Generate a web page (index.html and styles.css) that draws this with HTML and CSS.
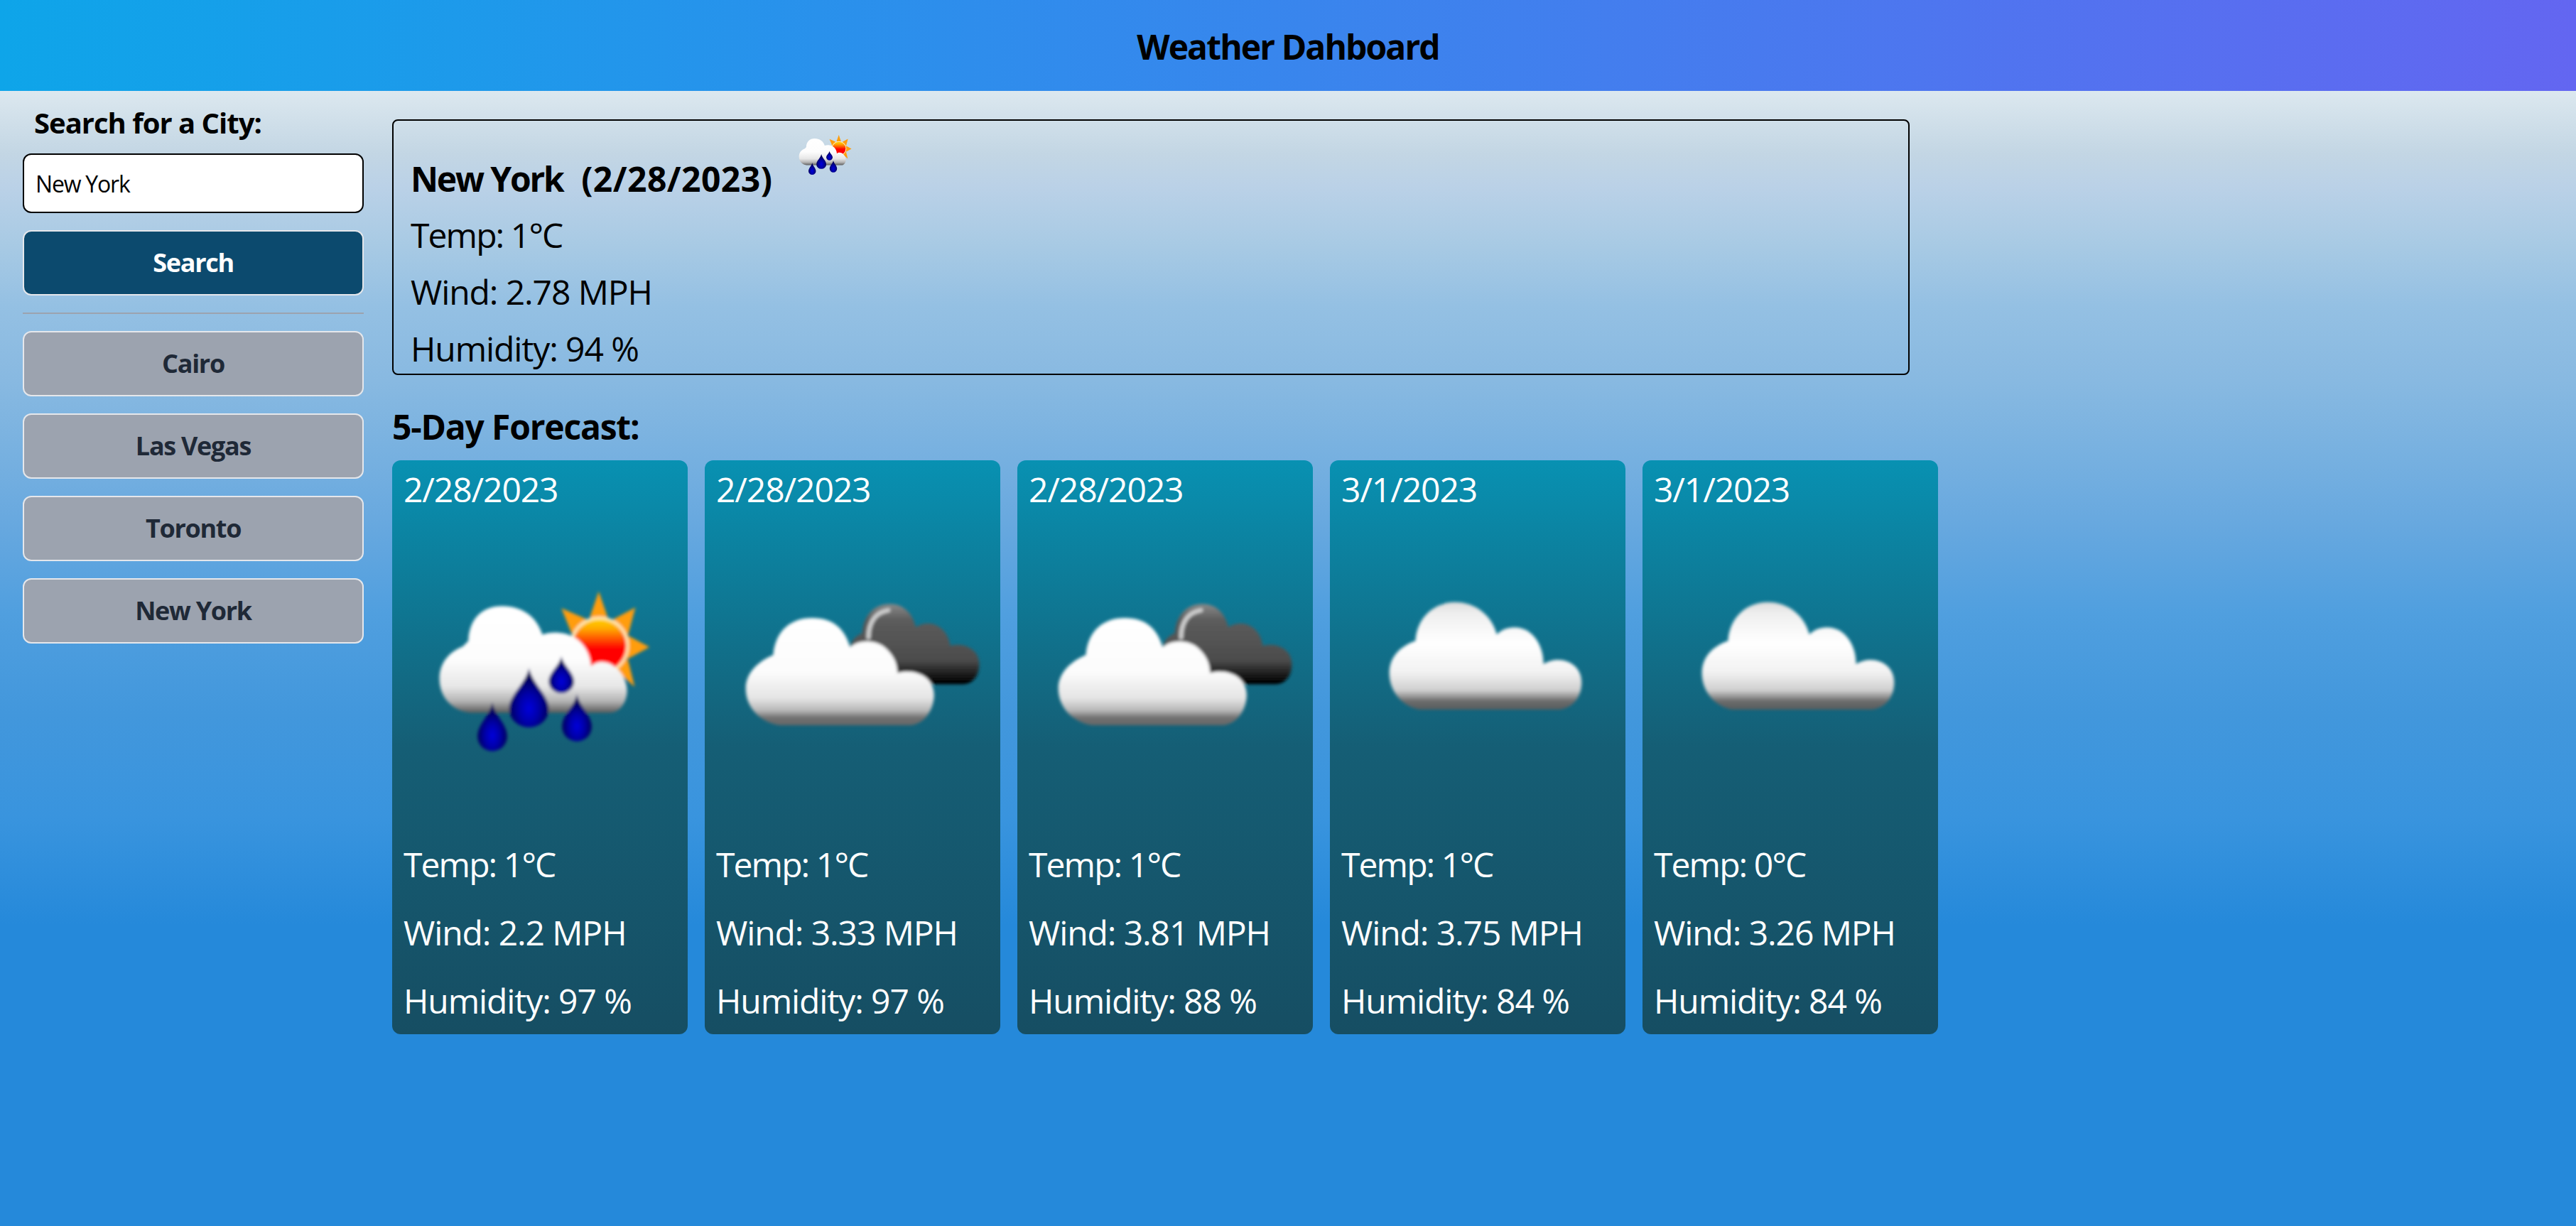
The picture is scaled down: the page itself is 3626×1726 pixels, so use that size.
FILE: index.html
```html
<!DOCTYPE html>
<html lang="en">
<head>
<meta charset="utf-8">
<title>Weather Dashboard</title>
<link rel="stylesheet" href="styles.css">
</head>
<body>
<svg class="sprite" aria-hidden="true">
  <defs>
    <filter id="soft" x="-10%" y="-10%" width="120%" height="120%"><feGaussianBlur stdDeviation="2.4"/></filter>
    <linearGradient id="rainCloud" gradientUnits="userSpaceOnUse" x1="0" y1="100" x2="0" y2="256">
      <stop offset="0" stop-color="#fff"/><stop offset=".5" stop-color="#fdfdfd"/><stop offset=".75" stop-color="#e6e6e6"/><stop offset=".88" stop-color="#b4b4b4"/><stop offset="1" stop-color="#505050"/>
    </linearGradient>
    <linearGradient id="frontCloud" gradientUnits="userSpaceOnUse" x1="0" y1="118" x2="0" y2="272">
      <stop offset="0" stop-color="#fff"/><stop offset=".5" stop-color="#fcfcfc"/><stop offset=".75" stop-color="#e4e4e4"/><stop offset=".86" stop-color="#b8b8b8"/><stop offset=".93" stop-color="#707070"/><stop offset="1" stop-color="#686868"/>
    </linearGradient>
    <linearGradient id="loneCloud" gradientUnits="userSpaceOnUse" x1="0" y1="95" x2="0" y2="248">
      <stop offset="0" stop-color="#dedede"/><stop offset=".12" stop-color="#f0f0f0"/><stop offset=".38" stop-color="#fff"/><stop offset=".65" stop-color="#f2f2f2"/><stop offset=".82" stop-color="#cfcfcf"/><stop offset=".92" stop-color="#6c6c6c"/><stop offset="1" stop-color="#585c5e"/>
    </linearGradient>
    <linearGradient id="darkCloud" gradientUnits="userSpaceOnUse" x1="0" y1="98" x2="0" y2="213">
      <stop offset="0" stop-color="#8a8a8a"/><stop offset=".2" stop-color="#5c5c5c"/><stop offset=".7" stop-color="#4c4c4c"/><stop offset=".95" stop-color="#080808"/><stop offset="1" stop-color="#000"/>
    </linearGradient>
    <linearGradient id="sunDisc" gradientUnits="userSpaceOnUse" x1="0" y1="118" x2="0" y2="196">
      <stop offset="0" stop-color="#ffd800"/><stop offset=".2" stop-color="#ffa800"/><stop offset=".45" stop-color="#ff3800"/><stop offset=".56" stop-color="#f00"/>
    </linearGradient>
    <radialGradient id="drop" cx=".5" cy=".68" r=".5">
      <stop offset="0" stop-color="#0000dc"/><stop offset=".5" stop-color="#0000a8"/><stop offset="1" stop-color="#00005c"/>
    </radialGradient>
    <symbol id="icon-rain" viewBox="0 0 400 400">
      <g filter="url(#soft)" transform="translate(2 1) scale(.992 .982)">
        <path fill="#ff9d0c" d="M275 80L288 118H262ZM222 104L258 120L238 144ZM327 103L316 145L292 122ZM347 160L314 178V142ZM326 217L296 190L316 176Z"/>
        <circle cx="276" cy="158" r="42" fill="#ffe9b8"/>
        <circle cx="276" cy="158" r="38" fill="url(#sunDisc)"/>
        <path fill="url(#rainCloud)" d="M90 151C91 119 110 101 138 101S187 116 195 142C207 137 226 138 239 145C255 154 263 171 264 187C274 178 290 180 300 190C311 199 316 215 315 226C313 243 303 254 290 254H92C66 251 49 231 49 205C49 183 62 167 82 159Z"/>
        <g fill="url(#drop)">
          <path d="M176 190C181 213 204 228 204 249A28 26 0 0 1 148 249C148 228 171 213 176 190Z"/>
          <path d="M222 173C225 187 240 196 240 209A18 17 0 0 1 204 209C204 196 219 187 222 173Z"/>
          <path d="M124 239C127 258 145 270 145 288A21 21 0 0 1 103 288C103 270 121 258 124 239Z"/>
          <path d="M244 227C247 245 265 256 265 274A21 21 0 0 1 223 274C223 256 241 245 244 227Z"/>
        </g>
      </g>
    </symbol>
    <symbol id="icon-broken" viewBox="0 0 400 400">
      <g filter="url(#soft)" transform="translate(2 1) scale(.993 .982)">
        <path fill="url(#darkCloud)" d="M188 160C190 150 196 144 205 140C207 113 223 98 244 98C263 98 276 110 281 131C303 118 326 131 330 158C352 152 371 165 371 184C371 202 361 213 348 213H270L215 190Z"/>
        <path fill="none" stroke="#cfcfcf" stroke-width="6" stroke-linecap="round" d="M242 107C224 110 214 124 214 146"/>
        <path fill="url(#frontCloud)" d="M79 171C82 136 104 118 134 118S180 133 188 160C200 149 226 148 240 163C250 173 255 184 255 197C280 190 307 202 307 229C306 252 292 271 272 272H88C61 268 40 247 40 219C40 198 56 181 79 171Z"/>
      </g>
    </symbol>
    <symbol id="icon-cloud" viewBox="0 0 400 400">
      <g filter="url(#soft)" transform="translate(1 1) scale(.995 .988)">
        <path fill="url(#loneCloud)" d="M104 150C106 117 130 95 160 95C189 95 212 114 219 141C231 128 255 127 269 141C280 152 285 167 285 183C308 169 339 181 339 209C339 229 328 245 308 248H110C84 243 67 221 67 196C67 174 81 158 104 150Z"/>
      </g>
    </symbol>
  </defs>
</svg>

<header class="topbar"><h1 class="title">Weather Dahboard</h1></header>

<div class="layout">
  <aside class="sidebar">
    <label class="label" for="city">Search for a City:</label>
    <input class="input" id="city" type="text" value="New York">
    <button class="btn btn-search">Search</button>
    <hr class="rule">
    <button class="btn">Cairo</button>
    <button class="btn">Las Vegas</button>
    <button class="btn">Toronto</button>
    <button class="btn">New York</button>
  </aside>

  <main class="main">
    <section class="current">
      <div class="current-head">
        <h2 class="city">New York&nbsp; <span class="date">(2/28/2023)</span></h2>
        <svg class="icon-small"><use href="#icon-rain"/></svg>
      </div>
      <p class="line temp">Temp: 1°C</p>
      <p class="line">Wind: 2.78 MPH</p>
      <p class="line">Humidity: 94 %</p>
    </section>

    <h2 class="forecast-title">5-Day Forecast:</h2>
    <section class="forecast">
      <article class="card">
        <p>2/28/2023</p>
        <svg class="icon-large"><use href="#icon-rain"/></svg>
        <p class="temp">Temp: 1°C</p><p>Wind: 2.2 MPH</p><p>Humidity: 97 %</p>
      </article>
      <article class="card">
        <p>2/28/2023</p>
        <svg class="icon-large"><use href="#icon-broken"/></svg>
        <p class="temp">Temp: 1°C</p><p>Wind: 3.33 MPH</p><p>Humidity: 97 %</p>
      </article>
      <article class="card">
        <p>2/28/2023</p>
        <svg class="icon-large"><use href="#icon-broken"/></svg>
        <p class="temp">Temp: 1°C</p><p>Wind: 3.81 MPH</p><p>Humidity: 88 %</p>
      </article>
      <article class="card">
        <p>3/1/2023</p>
        <svg class="icon-large"><use href="#icon-cloud"/></svg>
        <p class="temp">Temp: 1°C</p><p>Wind: 3.75 MPH</p><p>Humidity: 84 %</p>
      </article>
      <article class="card">
        <p>3/1/2023</p>
        <svg class="icon-large"><use href="#icon-cloud"/></svg>
        <p class="temp">Temp: 0°C</p><p>Wind: 3.26 MPH</p><p>Humidity: 84 %</p>
      </article>
    </section>
  </main>
</div>
</body>
</html>
```
FILE: styles.css
```css
* { box-sizing: border-box; margin: 0; padding: 0; }

body {
  height: 1726px;
  display: flex;
  flex-direction: column;
  font-family: "Open Sans", "Noto Sans", sans-serif;
  color: #000;
  overflow: hidden;
}

.sprite { position: absolute; width: 0; height: 0; }

.topbar {
  height: 128px;
  display: flex;
  align-items: center;
  justify-content: center;
  background: linear-gradient(to right, #0ea5e9, #6366f1);
}

.title, .city, .forecast-title { font-size: 48px; font-weight: 700; line-height: 64px; }
.title { padding-top: 3px; letter-spacing: -1.9px; }

.layout {
  flex: 1;
  display: flex;
  align-items: flex-start;
  gap: 40px;
  padding-left: 32px;
  background: linear-gradient(to bottom, #dce8ef 0%, #c3d6e4 5.5%, #bad1e7 8.5%, #a8cae4 13.5%, #94c0e3 19%, #88b9e1 25.5%, #76b0e0 32.5%, #67a8df 38.3%, #509fdf 46%, #4297dc 55%, #3994de 64%, #2589da 73.5%);
}

.sidebar { width: 480px; padding-top: 17px; display: flex; flex-direction: column; gap: 24px; }
.label { font-size: 40px; font-weight: 700; line-height: 56px; letter-spacing: -1px; padding-left: 16px; margin-bottom: -9px; }

.input {
  height: 84px;
  padding: 0 16px;
  border: 2px solid #000;
  border-radius: 12px;
  background: #fff;
  font: 400 32px/48px "Open Sans", "Noto Sans", sans-serif;
  letter-spacing: -1.2px;
  color: #000;
}

.btn {
  height: 92px;
  border: 2px solid #e5e7eb;
  border-radius: 12px;
  background: #9ca3af;
  color: #1f2937;
  font: 700 36px/56px "Open Sans", "Noto Sans", sans-serif;
  letter-spacing: -1.3px;
}
.btn-search { background: #0c4a6e; color: #fff; }
.rule { height: 2px; border: 0; background: #9ca3af; }

.main { width: 2176px; padding-top: 40px; }

.current {
  width: 2136px;
  height: 360px;
  padding-left: 24px;
  border: 2px solid #000;
  border-radius: 8px;
}
.current-head { display: flex; height: 121px; }
.city { line-height: 80px; padding-top: 42px; width: 534px; white-space: nowrap; letter-spacing: -2.2px; }
.date { margin-left: 5px; letter-spacing: .45px; }
.icon-small { width: 100px; height: 100px; }
.line { font-size: 48px; line-height: 80px; letter-spacing: -1.1px; }

.forecast-title { padding-top: 41px; height: 120px; letter-spacing: -1.2px; }

.forecast { display: grid; grid-template-columns: repeat(5, 416px); gap: 24px; }

.card {
  height: 808px;
  padding: 9px 0 15px 16px;
  display: flex;
  flex-direction: column;
  gap: 32px;
  border-radius: 12px;
  background: linear-gradient(to bottom, #0891b2, #155e75 50%, #164e63);
  color: #fff;
  font-size: 48px;
  line-height: 64px;
  letter-spacing: -1.1px;
}
.temp { letter-spacing: -1.9px; }
.icon-large { width: 400px; height: 400px; flex: none; }
```
